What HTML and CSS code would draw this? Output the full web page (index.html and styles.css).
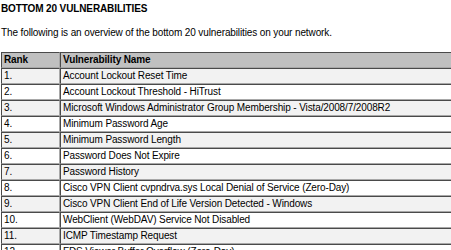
FILE: index.html
```html
<!DOCTYPE html>
<html>
<head>
<meta charset="utf-8">
<link rel="stylesheet" href="styles.css">
</head>
<body>
<div class="page">
<h1 class="title">BOTTOM 20 VULNERABILITIES</h1>
<p class="intro">The following is an overview of the bottom 20 vulnerabilities on your network.</p>
<table class="vulns">
<thead>
<tr><th class="rank">Rank</th><th class="name">Vulnerability Name</th></tr>
</thead>
<tbody>
<tr class="odd"><td>1.</td><td>Account Lockout Reset Time</td></tr>
<tr><td>2.</td><td>Account Lockout Threshold - HiTrust</td></tr>
<tr class="odd"><td>3.</td><td>Microsoft Windows Administrator Group Membership - Vista/2008/7/2008R2</td></tr>
<tr><td>4.</td><td>Minimum Password Age</td></tr>
<tr class="odd"><td>5.</td><td>Minimum Password Length</td></tr>
<tr><td>6.</td><td>Password Does Not Expire</td></tr>
<tr class="odd"><td>7.</td><td>Password History</td></tr>
<tr><td>8.</td><td>Cisco VPN Client cvpndrva.sys Local Denial of Service (Zero-Day)</td></tr>
<tr class="odd"><td>9.</td><td>Cisco VPN Client End of Life Version Detected - Windows</td></tr>
<tr><td>10.</td><td>WebClient (WebDAV) Service Not Disabled</td></tr>
<tr class="odd"><td>11.</td><td>ICMP Timestamp Request</td></tr>
<tr><td>12.</td><td>FDS Viewer Buffer Overflow (Zero-Day)</td></tr>
</tbody>
</table>
</div>
</body>
</html>
```
FILE: styles.css
```css
html, body { margin: 0; padding: 0; background: #fff; }
body { font-family: "Liberation Sans", Arial, sans-serif; font-size: 10px; letter-spacing: -0.12px; color: #000; overflow: hidden; }
.page { padding: 3px 1px 0 1px; width: 520px; }
.title { font-size: 10px; font-weight: bold; margin: 0; line-height: 12px; }
.intro { margin: 12px 0 0 0; line-height: 12px; }
.vulns { margin-top: 13px; border-collapse: separate; border-spacing: 0; width: 520px; }
.vulns th, .vulns td { border: 1px solid; border-color: #4a4a4a #a8a8a8 #a8a8a8 #4a4a4a; padding: 0 2px; height: 14px; line-height: 14px; text-align: left; white-space: nowrap; }
.vulns th { background: #c0c0c0; font-weight: bold; }
.vulns th.rank { width: 53px; }
.vulns tr.odd td { background: #f2f2f2; }
```
